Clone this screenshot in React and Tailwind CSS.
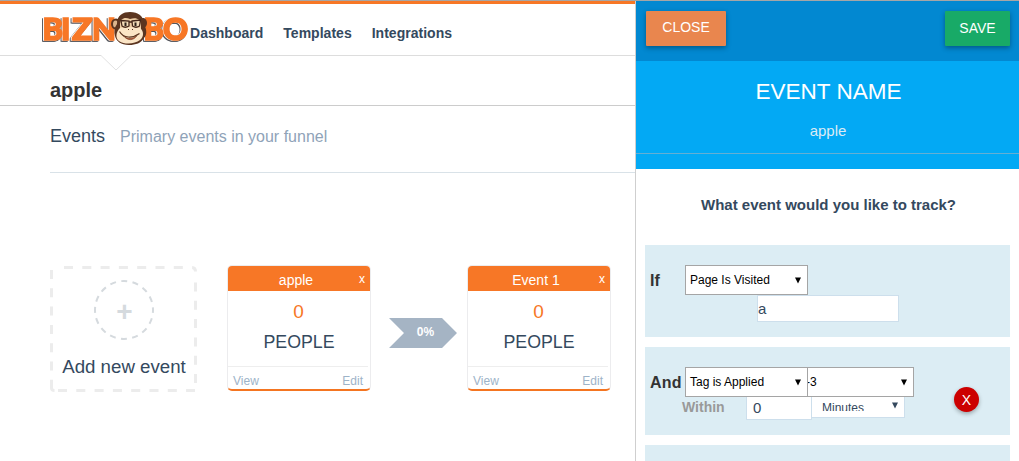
const NAV = ['Dashboard', 'Templates', 'Integrations'];

function Monkey() {
  return (
    <g>
      <ellipse cx="75" cy="13" rx="5" ry="5.500" fill="#5b3520" />
      <ellipse cx="102" cy="12" rx="4" ry="5" fill="#5b3520" />
      <ellipse cx="74.500" cy="13" rx="2.500" ry="3.500" fill="#dcb58c" />
      <path d="M76 13C76 4 82 1 89 1c8 0 14 4 14 12 3 6 3 11 0 14-3 5-8 7-15 7-8 0-13-4-14-9-1-4-1-8 2-12z" fill="#5b3520" />
      <path d="M79 14c0-7 5-8 10-6 6-2 11 0 11 6v4H79z" fill="#efcfa6" />
      <path d="M79 17c7-1 15-1 20 0 4 3 4 9 0 12-5 4-15 5-21 1-4-3-3-9 1-13z" fill="#fbe5c6" />
      <path d="M80 9.500l8 .5v5q-4 2.500-7 0zM91 10l8.500-1-1 6q-3.500 2.500-7 0zM88 11h3" fill="#f4dcb8" stroke="#45271a" strokeWidth="1.300" />
      <path d="M84.500 11.500v3.500M94.500 11.500v3.500" stroke="#2d211b" strokeWidth="2" />
      <path d="M87 18.500h1M91 18.500h1" stroke="#5b3520" strokeWidth="1" />
      <path d="M78.500 20.500c4 7 13 7 20 2" fill="none" stroke="#5b3520" strokeWidth="1.200" />
      <path d="M82 24.500c5 4 9 4 14 0-3 5-9 6-14 0z" fill="#e35d38" stroke="#5b3520" strokeWidth=".6" />
    </g>
  );
}

function Letters() {
  return (
    <g
      className="[filter:drop-shadow(-1px_0.5px_0_#ffffff)_drop-shadow(-1px_1px_0_#55565c)]"
      fill="#f77726"
      stroke="#f77726"
      strokeWidth="1.600"
      fontFamily="Lato, sans-serif"
      fontWeight="900"
      fontSize="31"
    >
      <text x="1.500" y="29" textLength="20.500" lengthAdjust="spacingAndGlyphs">B</text>
      <text x="20" y="29">I</text>
      <text x="31" y="29" textLength="20.500" lengthAdjust="spacingAndGlyphs">Z</text>
      <text x="51" y="29">N</text>
      <text x="102.500" y="29" textLength="20.500" lengthAdjust="spacingAndGlyphs">B</text>
      <text x="122" y="29">O</text>
    </g>
  );
}

function Logo() {
  return (
    <svg width="149" height="36" viewBox="0 0 149 36" className="block shrink-0 overflow-visible" aria-label="Biznobo">
      <Letters />
      <Monkey />
    </svg>
  );
}

function EventCard({ name }) {
  return (
    <div className="flex h-[126px] w-36 shrink-0 flex-col overflow-hidden rounded-[5px] border border-b-2 border-[#ececee] border-b-[#f47521]">
      <div className="grid h-[25px] shrink-0 grid-cols-[1fr_auto_1fr] bg-[#f77726] text-sm leading-7 text-white">
        <span />
        <span className="pr-1.5">{name}</span>
        <span className="pr-[5px] text-right text-xs leading-[26px]">x</span>
      </div>
      <div className="mt-2 h-[26px] pr-px text-center text-[19px] leading-[26px] text-[#f77726]">0</div>
      <div className="mt-1 h-[26px] text-center text-[17.800px] leading-[26px] text-[#34495e]">PEOPLE</div>
      <div className="mt-[11px] mr-0.5 flex justify-between border-t border-[#eeeeee] pr-[5px] pl-[5px] text-xs leading-7 text-[#9db3c8]">
        <span>View</span>
        <span>Edit</span>
      </div>
    </div>
  );
}

function AddEvent() {
  return (
    <div className="relative mt-px mr-[30px] flex h-[126px] w-[147px] shrink-0 flex-col items-center pt-3.5">
      <svg width="147" height="126" viewBox="0 0 147 126" className="absolute inset-0" fill="none">
        <path d="M14 1.500H142q3.500 0 3.500 4" stroke="#ececec" strokeWidth="3" strokeDasharray="9 9.300" />
        <path d="M145.500 16.500V118" stroke="#ececec" strokeWidth="3" strokeDasharray="9 9.300" />
        <path d="M8 124.500H145" stroke="#ececec" strokeWidth="3" strokeDasharray="9 9.300" />
        <path d="M1.500 4V116" stroke="#ececec" strokeWidth="3" strokeDasharray="9 9.300" />
        <path d="M1.500 116v6q0 2.500 3 2.500" stroke="#ececec" strokeWidth="3" />
        <circle cx="74" cy="44" r="29" stroke="#d5dade" strokeWidth="2" strokeDasharray="6 5.390" strokeDashoffset="3" />
      </svg>
      <div className="flex size-[60px] items-center justify-center pt-[3px] pl-0.5 text-[28px] leading-7 font-bold text-[#d5dade]">+</div>
      <div className="mt-[15px] pl-px text-[18.700px] leading-6 whitespace-nowrap text-[#34495e]">Add new event</div>
    </div>
  );
}

function Caret({ color = '#000000', className = '' }) {
  return (
    <svg width="6" height="7" viewBox="0 0 6 7" className={className}>
      <path d="M0 .5h6L3 6.500z" fill={color} />
    </svg>
  );
}

function Select({ label, className }) {
  return (
    <div className={`flex h-[30px] items-center justify-between border border-[#a5a5a5] bg-white text-xs text-black ${className}`}>
      <span>{label}</span>
      <Caret />
    </div>
  );
}

export default function App() {
  return (
    <div className="flex h-[461px] w-[1019px] flex-col overflow-hidden border-t border-[#a6a6a6] bg-white font-['Liberation_Sans',Arial,sans-serif]">
      <div className="flex min-h-0 flex-1">
        <main className="w-[635px] shrink-0">
          <header className="relative flex h-[55px] border-t-[3px] border-b border-t-[#f77726] border-b-[#dddddd] pl-[41px]">
            <div className="pt-[7px]">
              <Logo />
            </div>
            <nav className="flex gap-5 pt-[18px] text-sm leading-[22px] font-bold tracking-[0.020px] text-[#34495e]">
              {NAV.map((n) => (
                <span key={n}>{n}</span>
              ))}
            </nav>
            <svg width="32" height="17" viewBox="0 0 32 17" className="absolute top-[50px] left-[100px]">
              <path d="M1 0h30v2L16 16.500 1 2z" fill="#fff" />
              <path d="M1 1.500L16 16 31 1.500" fill="none" stroke="#e2e2e2" />
            </svg>
          </header>
          <div className="h-[50px] border-b border-[#cccccc] pt-[22px] pl-[50px] text-xl leading-6 font-bold text-[#333333]">apple</div>
          <section className="pl-[50px]">
            <div className="flex h-[67px] gap-[15px] border-b border-[#d9e2e8] pt-[18px] leading-6">
              <span className="text-lg leading-6 text-[#34495e]">Events</span>
              <span className="pt-px text-base leading-6 text-[#8fa3b8]">Primary events in your funnel</span>
            </div>
            <div className="flex pt-[92px]">
              <AddEvent />
              <EventCard name="apple" />
              <div className="mt-[53px] mr-2.5 ml-[18px] h-[30px] w-[68px] shrink-0 bg-[#a5b4c4] pl-[5px] text-center text-xs leading-7 font-bold text-white [clip-path:polygon(0_0,53px_0,100%_50%,53px_100%,0_100%,15px_50%)]">0%</div>
              <EventCard name="Event 1" />
            </div>
          </section>
        </main>

        <aside className="w-96 shrink-0 border-l border-[#cfcfcf]">
          <div className="flex h-[60px] items-start justify-between bg-[#0288d1] pt-2.5 pr-[9px] pl-2.5 text-sm text-white">
            <button className="h-[35px] w-20 rounded-[1px] bg-[#e9864e] pb-[3px] shadow-[0_2px_5px_rgba(0,0,0,0.35)]">CLOSE</button>
            <button className="h-[35px] w-[65px] rounded-[1px] bg-[#18aa67] pb-px shadow-[0_2px_5px_rgba(0,0,0,0.35)]">SAVE</button>
          </div>
          <div className="h-[108px] bg-[#03a9f4] text-center text-white">
            <div className="h-[93px] border-b border-[#65afd3] pt-[17px]">
              <div className="pl-0.5 text-[22.500px] leading-7">EVENT NAME</div>
              <div className="mt-[13px] pl-px text-[15px] leading-6 text-[#dcebf4]">apple</div>
            </div>
          </div>
          <h2 className="pt-6 pl-0.5 text-center text-[15px] leading-6 font-bold text-[#34495e]">What event would you like to track?</h2>

          <div className="mt-7 mr-[9px] ml-[9px] h-[92px] bg-[#dcedf4] pt-5">
            <div className="flex items-center">
              <span className="w-10 pt-px pl-[5px] text-base font-bold text-[#333333]">If</span>
              <Select label="Page Is Visited" className="w-[123px] pr-1.5 pl-1" />
            </div>
            <div className="ml-28 h-[27px] w-[142px] border border-[#cddfec] bg-white text-[15px] leading-[26px] text-[#34495e]">a</div>
          </div>

          <div className="mt-2.5 mr-[9px] ml-[9px] flex h-[88px] bg-[#dcedf4] pt-5">
            <div className="w-[270px] shrink-0">
              <div className="relative z-10 flex items-center">
                <span className="w-10 pt-px pl-[5px] text-base font-bold tracking-[0.200px] text-[#333333]">And</span>
                <Select label="Tag is Applied" className="relative z-10 w-[123px] pr-1.5 pl-1" />
                <Select label="-3" className="-ml-[3px] w-[109px] pr-1.5 pl-0" />
              </div>
              <div className="-mt-[4px] flex">
                <span className="w-16 pt-1 pl-[37px] text-sm leading-5 font-bold text-[#999999]">Within</span>
                <div className="ml-[37px] h-[27px] w-[66px] border border-[#cddfec] bg-white pl-1.5 text-[15px] leading-[27px] text-[#34495e]">0</div>
                <div className="-ml-px flex h-[25px] w-[94px] justify-between border border-[#cddfec] bg-white pr-1.5 pl-2.5 text-xs text-[#34495e]">
                  <span className="h-[17px] overflow-hidden leading-[29px]">Minutes</span>
                  <Caret color="#34495e" className="mt-2" />
                </div>
              </div>
            </div>
            <div className="mt-5 ml-[39px] flex size-[25px] items-center justify-center rounded-full bg-[#cc0000] text-sm text-white shadow-[0_2px_4px_rgba(0,0,0,0.3)]">X</div>
          </div>

          <div className="mt-2.5 mr-[9px] ml-[9px] h-4 bg-[#dcedf4]" />
        </aside>
      </div>
    </div>
  );
}
